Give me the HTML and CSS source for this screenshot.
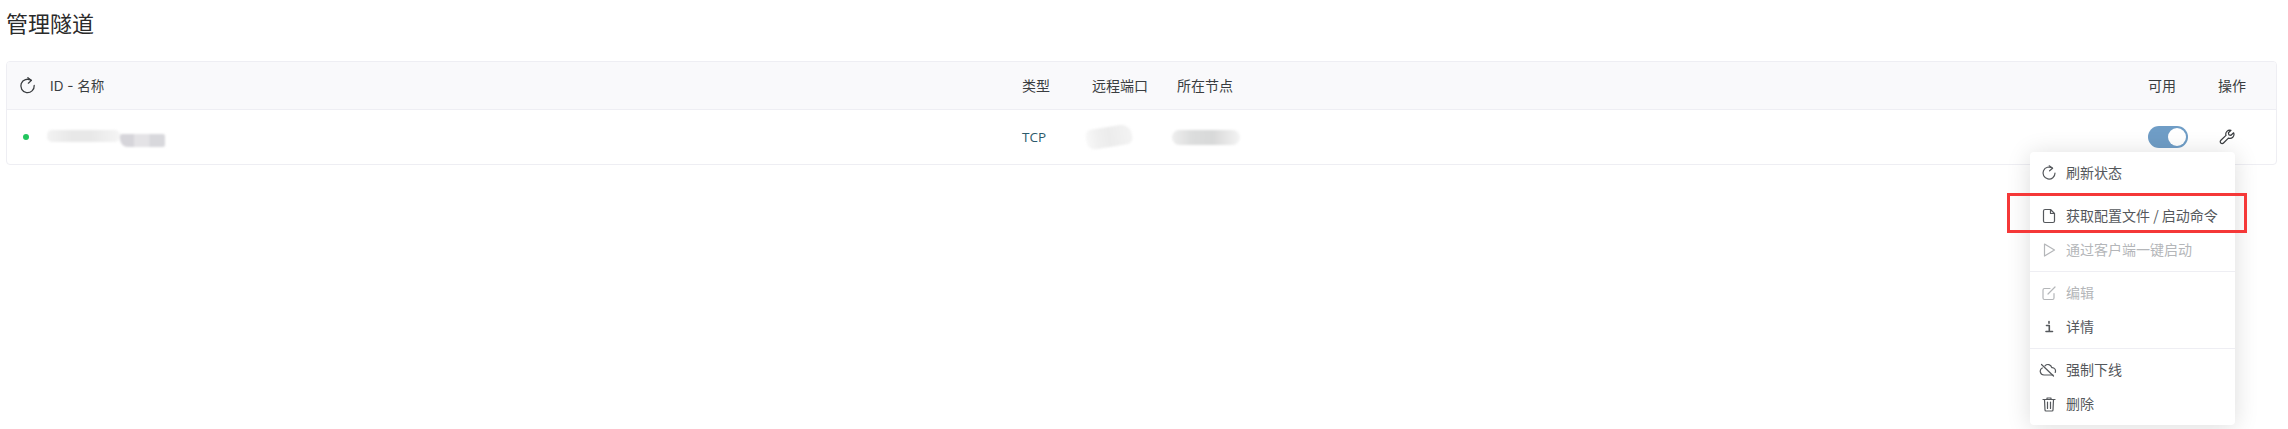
FILE: index.html
```html
<!DOCTYPE html>
<html lang="zh">
<head>
<meta charset="utf-8">
<title>管理隧道</title>
<link rel="stylesheet" href="styles.css">
</head>
<body>
<main class="page">
  <h1 class="title">管理隧道</h1>
  <section class="table">
    <div class="row head">
      <div class="cell c-name">
        <svg class="ico refresh" viewBox="0 0 16 16"><path d="M11.500 3.200A6.300 6.300 0 1 0 14.300 8"/><path d="M8.400 .6 11.700 3.200 8.800 5.800"/></svg>
        <span>ID - 名称</span>
      </div>
      <div class="cell c-type">类型</div>
      <div class="cell c-port">远程端口</div>
      <div class="cell c-node">所在节点</div>
      <div class="cell c-on">可用</div>
      <div class="cell c-op">操作</div>
    </div>
    <div class="row body">
      <div class="cell c-name">
        <i class="dot"></i>
        <span class="smudge s-name"><b></b><b></b></span>
      </div>
      <div class="cell c-type tcp">TCP</div>
      <div class="cell c-port"><span class="smudge s-port"><b></b></span></div>
      <div class="cell c-node"><span class="smudge s-node"><b></b></span></div>
      <div class="cell c-on"><span class="switch"><i></i></span></div>
      <div class="cell c-op">
        <svg class="ico wrench" viewBox="0 0 16 16"><path d="M14.600 3.800 12 6.300l-2.100-.4-.5-2.100L12 1.300a4 4 0 0 0-5 5.100L1.900 11.300c-.8.8-.8 1.900-.1 2.700.8.800 2 .8 2.700 0l4.900-4.900a4 4 0 0 0 5.200-5.300Z"/></svg>
      </div>
    </div>
  </section>
</main>

<nav class="menu">
  <div class="group">
    <div class="item">
      <svg class="ico" viewBox="0 0 16 16"><path d="M11.500 3.200A6 6 0 1 0 14 8"/><path d="M8.200 .8 11.600 3.200 8.600 5.800"/></svg>
      <span>刷新状态</span>
    </div>
  </div>
  <div class="group">
    <div class="item">
      <svg class="ico" viewBox="0 0 16 16"><path d="M4 1.500h5.500L13.500 5.500v7.500a1.500 1.500 0 0 1-1.500 1.500H4A1.500 1.500 0 0 1 2.500 13V3A1.500 1.500 0 0 1 4 1.500Z"/><path d="M9.500 1.500v4h4"/></svg>
      <span>获取配置文件 / 启动命令</span>
    </div>
    <div class="item off">
      <svg class="ico" viewBox="0 0 16 16"><path d="M3.500 2 13.500 8 3.500 14Z"/></svg>
      <span>通过客户端一键启动</span>
    </div>
  </div>
  <div class="group">
    <div class="item off">
      <svg class="ico" viewBox="0 0 16 16"><path d="M13 8.500V13a1.500 1.500 0 0 1-1.500 1.500h-8A1.500 1.500 0 0 1 2 13V5a1.500 1.500 0 0 1 1.500-1.500H9"/><path d="M7 9 14 2"/></svg>
      <span>编辑</span>
    </div>
    <div class="item">
      <svg class="ico info" viewBox="0 0 16 16"><path d="M8 2.500v1.800M5.500 6.500H8.300v6M5 12.500h6.500"/></svg>
      <span>详情</span>
    </div>
  </div>
  <div class="group">
    <div class="item">
      <svg class="ico cloud" viewBox="0 0 18 16"><path d="M6 3.800a4 4 0 0 1 6.800 1.800 3.400 3.400 0 0 1 3.400 4.800M14 13H5a3.700 3.700 0 0 1-1.700-7"/><path d="M2.500 2.500 14.500 14"/></svg>
      <span>强制下线</span>
    </div>
    <div class="item">
      <svg class="ico" viewBox="0 0 16 16"><path d="M2 3.500h12M6 3.500V2h4v1.500M3.500 3.500l.5 10.500a1 1 0 0 0 1 1h6a1 1 0 0 0 1-1l.5-10.500M6.500 6v6.500M9.500 6v6.500"/></svg>
      <span>删除</span>
    </div>
  </div>
</nav>
<div class="highlight"></div>
</body>
</html>
```
FILE: styles.css
```css
* { box-sizing: border-box; }
html, body { margin: 0; height: 100%; background: #fff; overflow: hidden; }
body {
  position: relative;
  font-family: "Noto Sans CJK SC", "Inter", sans-serif;
  color: #3a3d40;
}
.page { padding: 7px 11px 0 6px; }
.title {
  margin: 0 0 24px;
  height: 30px;
  font-size: 22px;
  line-height: 30px;
  font-weight: 400;
  color: #2a2a2a;
}
.table {
  border: 1px solid #eeeef3;
  border-radius: 4px;
  overflow: hidden;
}
.row { display: flex; align-items: center; }
.head {
  height: 48px;
  padding-bottom: 2px;
  background: #f9f9fb;
  border-bottom: 1px solid #eeeef3;
  font-size: 14px;
}
.body { height: 54px; font-size: 14px; }
.cell { flex: none; display: flex; align-items: center; }
.c-name { width: 1015px; padding-left: 12px; gap: 14px; }
.head .c-name span { font-family: "Inter", "Noto Sans CJK SC", sans-serif; font-size: 13.500px; }
.c-type { width: 70px; }
.c-port { width: 85px; }
.c-node { flex: 1; }
.c-on { width: 70px; }
.c-op { width: 58px; }
.tcp { color: #2c5a6b; font-family: "Open Sans", sans-serif; font-size: 13.500px; }
.ico {
  width: 16px; height: 16px; flex: none;
  fill: none; stroke: currentColor; stroke-width: 1.200; stroke-linecap: round; stroke-linejoin: round;
}
.refresh { width: 17px; height: 17px; margin-top: 2px; }
.wrench { margin-left: 1px; }
.info { stroke-width: 1.600; }
.cloud { width: 18px; margin-left: -2px; margin-right: -0px; }
.dot {
  width: 6px; height: 6px; border-radius: 50%;
  background: #22c55e; margin-left: 4px; margin-right: 4px;
}
.smudge { display: flex; align-items: flex-start; filter: blur(1px); }
.smudge b { display: block; }
.s-name { margin-top: 2px; }
.s-name b:first-child {
  width: 73px; height: 12px; border-radius: 5px;
  background: linear-gradient(90deg, #f2f2f2 0, #e8e8e8 35%, #e8e8e8 60%, #f5f5f5 100%);
}
.s-name b:last-child {
  width: 45px; height: 13px; margin-top: 4px; border-radius: 2px 2px 2px 8px;
  background: linear-gradient(90deg, #d6d5da 0, #d6d5da 30%, #e4e3e6 31%, #e4e3e6 65%, #d8d8dc 66%);
}
.s-port b {
  width: 46px; height: 20px; margin-left: -6px; border-radius: 6px 10px 6px 8px;
  background: linear-gradient(90deg, #f8f8f8 0, #f0f0f0 25%, #ececec 50%, #f3f3f3 100%);
  transform: rotate(-9deg);
}
.s-node b {
  width: 68px; height: 15px; margin-left: -5px; border-radius: 8px;
  background: linear-gradient(90deg, #eeeeee 0, #dcdddd 30%, #d8d9d9 60%, #f4f4f4 100%);
}
.switch {
  display: block; width: 40px; height: 22px; border-radius: 11px;
  background: #6f9dc6; padding: 2px;
}
.switch i {
  display: block; width: 18px; height: 18px; border-radius: 50%;
  background: #fff; margin-left: 18px;
}
.menu {
  position: absolute; left: 2030px; top: 152px; width: 205px; height: 273px;
  background: #fff; border-radius: 4px;
  box-shadow: 0 2px 24px rgba(0,0,0,.14);
  padding: 4px 0;
  font-size: 14px; color: #55585c;
}
.group + .group { border-top: 1px solid #eeeef3; margin-top: 4px; padding-top: 4px; }
.item { display: flex; align-items: center; gap: 9px; height: 34px; padding-left: 11px; }
.item span { margin-top: -2px; }
.off { color: #b4b6b9; }
.highlight {
  position: absolute; left: 2007px; top: 193px; width: 240px; height: 40px;
  border: 3px solid #f53838;
}
```
